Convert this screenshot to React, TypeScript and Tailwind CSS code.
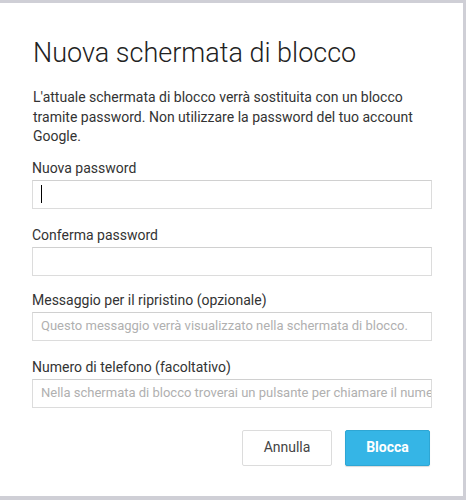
import React from "react";

function Field({ label, placeholder, cursor, className }: { label: string; placeholder?: string; cursor?: boolean; className?: string }) {
  return (
    <div className={className}>
      <div className="text-[14px] leading-[20px] text-[#333]">{label}</div>
      <div className="mt-[2px] h-[29px] w-[400px] border border-[#dcdcdc] border-t-[#d0d0d0] bg-white flex items-center pl-[8px] overflow-hidden whitespace-nowrap">
        {cursor ? <div className="h-[18px] w-[1px] bg-black" /> : null}
        {placeholder ? <span className="text-[13px] text-[#b0b0b0]">{placeholder}</span> : null}
      </div>
    </div>
  );
}

export default function App() {
  return (
    <div className="w-[466px] h-[500px] bg-[#cfcfd6] pt-[3px] pr-[3px] pb-[4px]" style={{ fontFamily: "Roboto, 'Noto Sans', sans-serif" }}>
      <div className="h-full w-full bg-white pl-[32px] pr-[31px] pt-[34px]">
        <div className="text-[27px] leading-[32px] font-light text-[#222] pl-[1px]">Nuova schermata di blocco</div>
        <div className="mt-[19px] text-[14px] leading-[19.5px] text-[#333] pl-[1px]">
          L'attuale schermata di blocco verrà sostituita con un blocco tramite password. Non utilizzare la password del tuo account Google.
        </div>
        <Field className="mt-[11px]" label="Nuova password" cursor />
        <Field className="mt-[16px]" label="Conferma password" />
        <Field className="mt-[14px]" label="Messaggio per il ripristino (opzionale)" placeholder="Questo messaggio verrà visualizzato nella schermata di blocco." />
        <Field className="mt-[16px]" label="Numero di telefono (facoltativo)" placeholder="Nella schermata di blocco troverai un pulsante per chiamare il numero" />
        <div className="mt-[22px] flex justify-end gap-[13px] pr-[2px]">
          <button className="h-[36px] w-[90px] border border-[#dcdcdc] rounded-[2px] bg-white text-[14px] text-[#444]">Annulla</button>
          <button className="h-[36px] w-[85px] border border-[#2ea6d4] rounded-[2px] bg-[#35b5e6] text-[14px] font-bold text-white shadow-[0_1px_1px_rgba(0,0,0,0.15)]">Blocca</button>
        </div>
      </div>
    </div>
  );
}
